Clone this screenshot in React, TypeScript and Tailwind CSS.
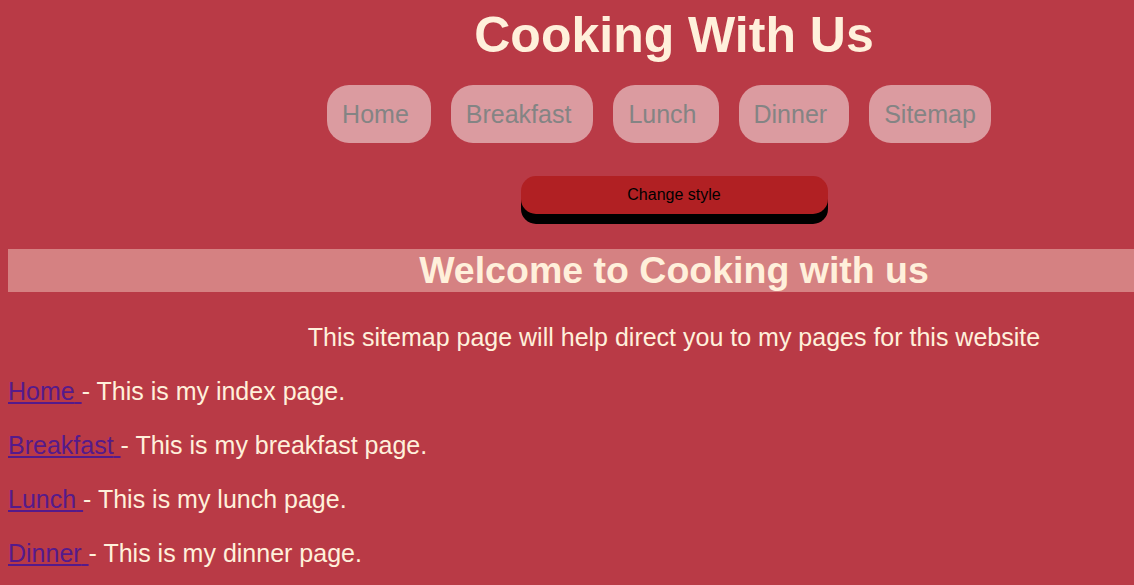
export default function App() {
  const pages = [
    { name: 'Home', desc: 'This is my index page.' },
    { name: 'Breakfast', desc: 'This is my breakfast page.' },
    { name: 'Lunch', desc: 'This is my lunch page.' },
    { name: 'Dinner', desc: 'This is my dinner page.' },
  ];

  const nav = ['Home', 'Breakfast', 'Lunch', 'Dinner', 'Sitemap'];

  return (
    <div className="min-h-[585px] w-[1348px] bg-[#b93a46] px-2 pt-[7px] pb-4 font-['Liberation_Sans',Arial,sans-serif] text-[25px] text-[#fff0db]">
      <h1 className="text-center text-[50px] leading-[57px] font-bold">Cooking With Us</h1>

      <nav className="mt-[21px] flex justify-center gap-[20px] pr-[30px]">
        {nav.map((item, i) => (
          <a
            key={item}
            href="#"
            className={
              i === nav.length - 1
                ? 'flex h-[58px] items-center rounded-[22px] bg-[#db9ba0] px-[15px] pt-[2px] text-[25px] text-[#848484]'
                : 'flex h-[58px] items-center rounded-[22px] bg-[#db9ba0] pt-[2px] pr-[22px] pl-[15px] text-[25px] text-[#848484]'
            }
          >
            {item}
          </a>
        ))}
      </nav>

      <div className="mt-[33px] flex justify-center">
        <button className="h-[38px] w-[307px] rounded-[15px] bg-[#b12023] text-[16px] text-black shadow-[0_10px_0_#000]">
          Change style
        </button>
      </div>

      <h2 className="mt-[35px] bg-[#d58182] text-center text-[37.5px] leading-[43px] font-bold">
        Welcome to Cooking with us
      </h2>

      <p className="mt-[31px] text-center leading-[29px]">
        This sitemap page will help direct you to my pages for this website
      </p>

      {pages.map((p) => (
        <p key={p.name} className="mt-[25px] leading-[29px]">
          <a href="#" className="text-[#551a8b] underline">
            {p.name}{' '}
          </a>
          - {p.desc}
        </p>
      ))}
    </div>
  );
}
